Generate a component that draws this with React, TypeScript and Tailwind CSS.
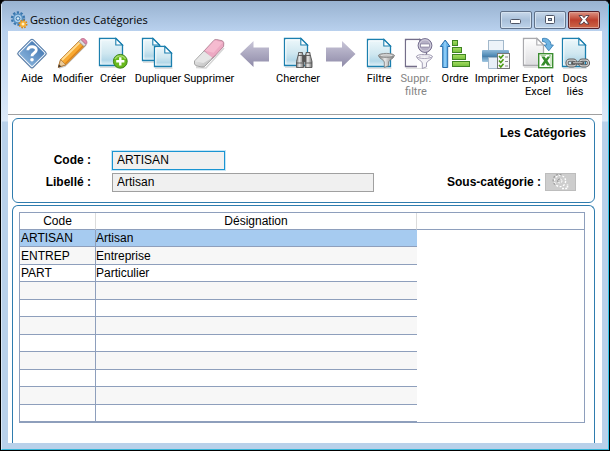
import { useState } from "react";
import type { ReactNode } from "react";

type Tool = {
    id: string;
    label: string;
    hint?: string;
    width: string;
    icon: ReactNode;
    disabled?: boolean;
};

const categories = [
    { code: "ARTISAN", name: "Artisan" },
    { code: "ENTREP", name: "Entreprise" },
    { code: "PART", name: "Particulier" },
];

const ROW_COUNT = 11;

// Gradients shared by the toolbar icons
function IconDefs() {
    return (
        <svg width="0" height="0" className="absolute" aria-hidden="true">
            <defs>
                <linearGradient id="page" x1="0" y1="0" x2="0" y2="1">
                    <stop offset="0" stopColor="#eef8fb" />
                    <stop offset="0.55" stopColor="#cfe7f0" />
                    <stop offset="0.8" stopColor="#b4d8e8" />
                    <stop offset="1" stopColor="#e6f3f9" />
                </linearGradient>
                <linearGradient id="greyPage" x1="0" y1="0" x2="0" y2="1">
                    <stop offset="0" stopColor="#ffffff" />
                    <stop offset="1" stopColor="#dcdcdf" />
                </linearGradient>
                <linearGradient id="arrow" x1="0" y1="0" x2="0" y2="1">
                    <stop offset="0" stopColor="#c9c6d8" />
                    <stop offset="1" stopColor="#8e8aa8" />
                </linearGradient>
                <linearGradient id="metal" x1="0" y1="0" x2="1" y2="0">
                    <stop offset="0" stopColor="#7d7d7d" />
                    <stop offset="0.4" stopColor="#e8e8e8" />
                    <stop offset="1" stopColor="#777777" />
                </linearGradient>
                <linearGradient id="blue" x1="0" y1="0" x2="0" y2="1">
                    <stop offset="0" stopColor="#4d80b8" />
                    <stop offset="1" stopColor="#7fabd6" />
                </linearGradient>
                <linearGradient id="green" x1="0" y1="0" x2="0" y2="1">
                    <stop offset="0" stopColor="#a6dd62" />
                    <stop offset="1" stopColor="#74bf3c" />
                </linearGradient>
                <linearGradient id="printer" x1="0" y1="0" x2="0" y2="1">
                    <stop offset="0" stopColor="#8fb9d8" />
                    <stop offset="0.5" stopColor="#4c87b3" />
                    <stop offset="1" stopColor="#a3c8e2" />
                </linearGradient>
                <linearGradient id="rubber" x1="0" y1="0" x2="1" y2="1">
                    <stop offset="0" stopColor="#f6f6f6" />
                    <stop offset="1" stopColor="#b4b4b4" />
                </linearGradient>
            </defs>
        </svg>
    );
}

function Icon({ children }: { children: ReactNode }) {
    return (
        <svg viewBox="0 0 34 34" className="h-[34px] w-[34px] shrink-0" fill="none" aria-hidden="true">
            {children}
        </svg>
    );
}

function Sheet({ x, y, w, h, stroke = "#1b7fae", fill = "url(#page)" }: { x: number; y: number; w: number; h: number; stroke?: string; fill?: string }) {
    return (
        <g transform={`translate(${x} ${y})`}>
            <path d={`M1 ${h + 1.2}H${w + 0.5}`} stroke="#bcbcbc" opacity="0.7" />
            <path d={`M0.5 0.5H${w - 7}L${w - 0.5} 7V${h - 0.5}H0.5Z`} fill={fill} stroke={stroke} strokeWidth="1.3" />
            <path d={`M1.8 ${h - 1.8}V1.8H${w - 8}`} stroke="#fff" />
            <path d={`M${w - 7.2} 0.5V7H${w - 0.5}Z`} fill="#fff" stroke={stroke} strokeWidth="1.1" />
        </g>
    );
}

function Funnel({ x, y, pale = false }: { x: number; y: number; pale?: boolean }) {
    const fill = pale ? "#f4f3f7" : "url(#metal)";
    const stroke = pale ? "#9993ad" : "#858585";
    return (
        <g transform={`translate(${x} ${y})`} stroke={stroke} strokeWidth="0.9">
            <path d="M0.5 2.5C1 6 6 6.5 6.3 9V14.5L10.5 12.8V9C11 6.5 16 6 16.3 2.5Z" fill={fill} />
            <ellipse cx="8.4" cy="2.4" rx="7.9" ry="2" fill={pale ? "#fff" : "#b9b9b9"} />
            <path d="M3 2.6C6 1.6 11 1.6 14 2.6" stroke={pale ? "#c9c5d6" : "#e4e4e4"} />
        </g>
    );
}

const HelpIcon = (
    <Icon>
        <path d="M17 2.2L32.6 17L17 32.8L1.4 17Z" fill="#999" opacity="0.35" />
        <rect x="6.4" y="5.9" width="21.2" height="21.2" rx="2" transform="rotate(45 17 16.5)" fill="#e9f0f8" stroke="#5079a8" />
        <rect x="8" y="7.5" width="18" height="18" rx="1" transform="rotate(45 17 16.5)" fill="url(#blue)" />
        <path d="M12.8 13.3C12.8 8.6 21.3 8.6 21.3 13C21.3 16.2 17 15.8 17 19.2" stroke="#fff" strokeWidth="2.8" />
        <circle cx="17" cy="22.8" r="1.8" fill="#fff" />
    </Icon>
);

const PencilIcon = (
    <Icon>
        <path d="M3 31L9 29L30 8" stroke="#999" strokeWidth="1.6" opacity="0.5" />
        <path d="M2.3 30.2L4.6 22.6L23.8 3.4L29 8.6L9.8 27.8Z" fill="#f8a932" stroke="#b77322" strokeWidth="0.9" />
        <path d="M6 23L24.6 4.6" stroke="#ffdc91" strokeWidth="2" />
        <path d="M9.3 26.6L28 8" stroke="#dc8218" strokeWidth="1.2" />
        <path d="M2.3 30.2L4.6 22.6L9.8 27.8Z" fill="#eccb98" stroke="#9f6a2c" strokeWidth="0.6" />
        <path d="M2 30.6L3 27.3L5.3 29.5Z" fill="#46392e" />
        <path d="M22.8 4.4L24.8 2.4L30 7.6L28 9.6Z" fill="#dcdcdc" stroke="#868686" strokeWidth="0.7" />
        <path d="M24.9 2.3C27.5 -0.5 33 4.5 30.1 7.4Z" fill="#e38bab" stroke="#b86586" strokeWidth="0.8" />
    </Icon>
);

const CreateIcon = (
    <Icon>
        <Sheet x={3} y={1} w={24} h={28} />
        <circle cx="24.3" cy="24.3" r="6.9" fill="#69b91c" stroke="#3f851b" />
        <path d="M19 22A6 6 0 0 1 29.5 22" stroke="#a4dc69" strokeWidth="1.3" />
        <path d="M24.3 20.2V28.4M20.2 24.3H28.4" stroke="#fff" strokeWidth="2.4" />
    </Icon>
);

const DuplicateIcon = (
    <Icon>
        <Sheet x={1} y={1} w={18} h={23} />
        <Sheet x={13} y={9} w={18} h={21} />
    </Icon>
);

const EraserIcon = (
    <Icon>
        <path d="M4 30.5L14 31L32 11" stroke="#999" opacity="0.4" strokeWidth="1.6" />
        <path d="M2.5 24L12.2 13.8L23.2 18.6L12.6 29.4Q11.6 30.2 10 30L4 28.8Q1.8 27.5 2.5 24Z" fill="url(#rubber)" stroke="#909090" strokeWidth="0.8" />
        <path d="M12.2 13.8L22 3.2Q23 2.2 24.6 2.5L30.4 3.8Q32.6 5 31.6 9.4L22.6 19.2L19.5 21.5Z" fill="#eda9c3" stroke="#a8798b" strokeWidth="0.8" />
        <path d="M13 13.8L22.6 3.6L30.8 5.4L21.6 15.8Z" fill="#f5bbd0" />
        <path d="M3 24.2L12.4 14.4L20.4 20.8L11.4 26Z" fill="#e6e6e6" />
    </Icon>
);

const PreviousIcon = (
    <Icon>
        <path d="M2 17L15.5 4V10.5H31V24.5H15.5V30Z" fill="url(#arrow)" />
    </Icon>
);

const NextIcon = (
    <Icon>
        <path d="M31.5 17L18 4V10.5H2V24.5H18V30Z" fill="url(#arrow)" />
    </Icon>
);

const SearchIcon = (
    <Icon>
        <Sheet x={3} y={1} w={24} h={28} />
        <g fill="url(#metal)" stroke="#555" strokeWidth="0.9">
            <path d="M17.5 17V15.5H21.5V17L22.5 18.5V30.5H15.5V24.5Z" />
            <path d="M29 17V15.5H25V17L24 18.5V30.5H31V24.5Z" />
            <rect x="21.7" y="18.5" width="3.1" height="6" fill="#555" />
            <path d="M15.5 26H22.5M24 26H31M17 18.5H22M24.5 18.5H29.5" />
        </g>
    </Icon>
);

const FilterIcon = (
    <Icon>
        <Sheet x={5} y={2} w={24} h={28} />
        <Funnel x={16} y={16} />
    </Icon>
);

const ClearFilterIcon = (
    <Icon>
        <Sheet x={6} y={2} w={22} h={28} stroke="#736d89" fill="#fbfbfd" />
        <path d="M18 20H29V31H18Z" fill="#fff" />
        <Funnel x={17} y={17} pale />
        <circle cx="26" cy="8.5" r="6.9" fill="#b5b0c6" stroke="#777090" />
        <circle cx="26" cy="8.5" r="5.6" stroke="#d2cfdd" />
        <rect x="21.5" y="7" width="9" height="3" fill="#fff" stroke="#716a8a" strokeWidth="0.6" />
    </Icon>
);

const SortIcon = (
    <Icon>
        <path d="M7.2 3L12 9.5H9.7V30.5H4.7V9.5H2.3Z" fill="#68b5ec" stroke="#286da8" />
        <path d="M7 5V30" stroke="#a3d8fa" strokeWidth="1.2" />
        <g fill="url(#green)" stroke="#3f8423">
            <rect x="14.5" y="3.5" width="5" height="5" />
            <rect x="14.5" y="10.5" width="9" height="5" />
            <rect x="14.5" y="17.5" width="13" height="5" />
            <rect x="14.5" y="24.5" width="17" height="5" />
        </g>
    </Icon>
);

const PrintIcon = (
    <Icon>
        <rect x="8.5" y="3.5" width="15" height="11" fill="#edf3f9" stroke="#a2b8cb" />
        <rect x="2" y="13" width="27" height="12" rx="1" fill="url(#printer)" />
        <path d="M3 19.5H28" stroke="#4c7fa8" />
        <path d="M8.5 20.5H20V31.5H8.5Z" fill="#e8eff7" stroke="#a2b8cb" />
        <rect x="17.5" y="16.5" width="12" height="15" fill="#f8f8f8" stroke="#777" />
        <path d="M19 19L20.8 21L23.5 17.8M19 23.5L20.8 25.5L23.5 22.3M19 28L20.8 30L23.5 26.8" stroke="#4b9a12" strokeWidth="1.6" />
        <path d="M25 20H28M25 24.5H28M25 29H28" stroke="#888" />
    </Icon>
);

const ExcelIcon = (
    <Icon>
        <Sheet x={2} y={1} w={21} h={28} stroke="#a9a9ad" fill="url(#greyPage)" />
        <path d="M21.5 4.5V1.5C26 0.5 30 3.5 30 8H32.4L27.8 13.8L23.2 8H25.5C25.5 6 24 4.5 21.5 4.5Z" fill="#6fb4e2" stroke="#3a7fb4" strokeWidth="0.9" />
        <rect x="17.7" y="16.7" width="14" height="14" fill="#fff" stroke="#3c8e31" strokeWidth="1.4" />
        <path d="M19.5 18.5H25M28 18.5H30V29H28" stroke="#a9d49c" />
        <path d="M20.3 19.5H23.6L25 21.7L26.6 19.5H29.4L26.4 23.8L29.6 28.5H26.2L24.7 26.1L23 28.5H19.8L23.1 23.8Z" fill="#358c2b" />
    </Icon>
);

const LinkedDocsIcon = (
    <Icon>
        <Sheet x={4} y={1} w={24} h={29} />
        <g stroke="#606060" strokeWidth="3.2">
            <rect x="9" y="23.2" width="9" height="5.6" rx="2.8" />
            <rect x="21.5" y="23.2" width="9" height="5.6" rx="2.8" />
        </g>
        <g stroke="#d0d0d0" strokeWidth="1.2">
            <rect x="9" y="23.2" width="9" height="5.6" rx="2.8" />
            <rect x="21.5" y="23.2" width="9" height="5.6" rx="2.8" />
        </g>
        <path d="M14.5 26H25" stroke="#555" strokeWidth="3" strokeLinecap="round" />
        <path d="M15 25.7H24.5" stroke="#ccc" strokeWidth="1.1" />
    </Icon>
);

const tools: Tool[] = [
    { id: "help", label: "Aide", width: "w-10", icon: HelpIcon },
    { id: "edit", label: "Modifier", width: "w-[42px]", icon: PencilIcon },
    { id: "create", label: "Créer", width: "w-[38px]", icon: CreateIcon },
    { id: "duplicate", label: "Dupliquer", width: "w-[52px]", icon: DuplicateIcon },
    { id: "delete", label: "Supprimer", width: "w-[50px]", icon: EraserIcon },
    { id: "previous", label: "", hint: "Précédent", width: "w-[42px]", icon: PreviousIcon },
    { id: "search", label: "Chercher", width: "w-11", icon: SearchIcon },
    { id: "next", label: "", hint: "Suivant", width: "w-[42px]", icon: NextIcon },
    { id: "filter", label: "Filtre", width: "w-[34px]", icon: FilterIcon },
    { id: "clear-filter", label: "Suppr.\nfiltre", width: "w-10", icon: ClearFilterIcon, disabled: true },
    { id: "sort", label: "Ordre", width: "w-[38px]", icon: SortIcon },
    { id: "print", label: "Imprimer", width: "w-[46px]", icon: PrintIcon },
    { id: "excel", label: "Export\nExcel", width: "w-9", icon: ExcelIcon },
    { id: "docs", label: "Docs\nliés", width: "w-[38px]", icon: LinkedDocsIcon },
];

function TitleBar() {
    return (
        <header className="flex h-[30px] items-center bg-linear-to-b from-[#98b2d0] to-[#b9d1ee] pt-2 pr-2 pl-2">
            <svg viewBox="0 0 18 18" className="h-[18px] w-[18px]" fill="none" aria-hidden="true">
                <circle cx="8" cy="7.5" r="5.9" stroke="#3976ad" strokeWidth="2.6" strokeDasharray="2.2 1.5" />
                <circle cx="8" cy="7.5" r="4.5" fill="#a9cdea" stroke="#568fc1" strokeWidth="1.6" />
                <circle cx="8" cy="7.5" r="1.8" fill="#dcecf8" stroke="#3976ad" />
                <circle cx="13" cy="13" r="3.5" stroke="#d88718" strokeWidth="2" strokeDasharray="1.6 1.1" />
                <circle cx="13" cy="13" r="2.3" fill="#fff0c8" stroke="#f3ad34" strokeWidth="1.6" />
            </svg>
            <h1 className="ml-[2px] flex-1 font-['Open_Sans','Noto_Sans',sans-serif] text-[11px] leading-4 whitespace-nowrap">Gestion des Catégories</h1>
            <div className="flex gap-[2px]">
                <button type="button" aria-label="Réduire" className="flex h-[18px] w-8 items-center justify-center rounded-xs border border-[#61728a] bg-linear-to-b from-[#c8d8ea] via-[#a9c0da] to-[#bdd3ea] shadow-[inset_0_0_0_1px_#d5e2f0]">
                    <svg viewBox="0 0 12 6" className="mt-1 h-[6px] w-3" aria-hidden="true">
                        <rect x="0.5" y="0.5" width="10" height="4" rx="1" fill="#fff" stroke="#4e5566" />
                    </svg>
                </button>
                <button type="button" aria-label="Agrandir" className="flex h-[18px] w-8 items-center justify-center rounded-xs border border-[#61728a] bg-linear-to-b from-[#c8d8ea] via-[#a9c0da] to-[#bdd3ea] shadow-[inset_0_0_0_1px_#d5e2f0]">
                    <svg viewBox="0 0 12 10" className="h-[10px] w-3" aria-hidden="true">
                        <rect x="1.5" y="0.5" width="9" height="8" rx="1" fill="#fff" stroke="#4e5566" />
                        <rect x="4.5" y="3.5" width="3" height="2" fill="#a9c0da" stroke="#4e5566" />
                    </svg>
                </button>
                <button type="button" aria-label="Fermer" className="flex h-[18px] w-8 items-center justify-center rounded-xs border border-[#56202a] bg-linear-to-b from-[#dc9183] via-[#bd3f2d] to-[#cc6648] shadow-[inset_0_0_0_1px_#dfa294]">
                    <svg viewBox="0 0 12 10" className="h-[10px] w-3" aria-hidden="true">
                        <path d="M1 0.5H4.2L6 2.7L7.8 0.5H11L7.8 4.7L11 9H7.8L6 6.8L4.2 9H1L4.2 4.7Z" fill="#fff" stroke="#4e3a45" strokeWidth="0.9" />
                    </svg>
                </button>
            </div>
        </header>
    );
}

export default function App() {
    const [selected, setSelected] = useState(0);
    const current = categories[selected];
    const rows = Array.from({ length: ROW_COUNT }, (_, i) => categories[i]);

    return (
        <div className="flex min-h-screen bg-black font-['Liberation_Sans',Arial,sans-serif] text-[12px] text-black">
            <IconDefs />
            <div className="flex flex-1 flex-col overflow-hidden rounded-t-md border border-black border-t-[#2b2b33] bg-[#b9d1ea]">
                <div className="flex flex-1 flex-col border-r border-b border-l border-r-[#35c5e8] border-b-[#35b5d8] border-l-[#dbe8f5]">
                    <TitleBar />

                    <div className="flex flex-1 flex-col bg-[linear-gradient(to_bottom,#b9d1ee_0,#dce9f8_90px,#b9d1ea_91px)] px-[6px] pb-[6px]">
                        <main className="flex flex-1 flex-col bg-white">
                            <nav className="flex h-[84px] border-b border-[#a0a0a0] pt-[6px] pl-1">
                                {tools.map((tool) => (
                                    <button
                                        key={tool.id}
                                        type="button"
                                        disabled={tool.disabled}
                                        aria-label={tool.hint}
                                        className={`flex shrink-0 flex-col items-center ${tool.width}`}
                                    >
                                        {tool.icon}
                                        <span className={`mt-px text-center font-[Roboto,'Liberation_Sans',sans-serif] text-[11px] leading-[13px] whitespace-pre ${tool.disabled ? "text-[#848484]" : ""}`}>
                                            {tool.label}
                                        </span>
                                    </button>
                                ))}
                            </nav>

                            <section className="mt-[3px] mr-[7px] ml-1 rounded-md border border-[#2f7cae] pt-1 pb-[10px]">
                                <h2 className="pr-2 text-right leading-5 font-bold">Les Catégories</h2>
                                <div className="mt-[7px] flex items-center">
                                    <label htmlFor="code" className="w-[78px] text-right leading-5 font-bold">Code :</label>
                                    <input
                                        id="code"
                                        readOnly
                                        value={current.code}
                                        className="ml-[21px] h-[19px] w-[113px] border border-[#1a94d2] bg-[#f0f0f0] px-1 shadow-[0_0_0_1px_#c5e6f6] outline-none"
                                    />
                                </div>
                                <div className="mt-[2px] flex items-center">
                                    <label htmlFor="name" className="w-[78px] text-right leading-5 font-bold">Libellé :</label>
                                    <input
                                        id="name"
                                        readOnly
                                        value={current.name}
                                        className="ml-[21px] h-[19px] w-[262px] border border-[#a0a0a0] bg-[#f0f0f0] px-1 outline-none"
                                    />
                                    <label htmlFor="sub" className="ml-auto leading-5 font-bold">Sous-catégorie :</label>
                                    <button id="sub" type="button" disabled className="mr-[18px] ml-1 flex h-[18px] w-[31px] items-center justify-center border border-[#bdbdbd] bg-[#cdcdcd]">
                                        <svg viewBox="0 0 18 16" className="h-4 w-[18px]" fill="none" aria-hidden="true">
                                            <circle cx="8" cy="7" r="5.6" stroke="#fff" strokeWidth="1.4" strokeDasharray="2 1.5" />
                                            <path d="M3 10.5A5.5 5.5 0 0 1 11 2" stroke="#999" strokeWidth="1.2" strokeDasharray="2 1.5" />
                                            <circle cx="8" cy="7" r="2" stroke="#fff" strokeDasharray="2 1" />
                                            <path d="M6 8A2 2 0 0 1 8 5" stroke="#8c8c8c" />
                                            <path d="M10 14.5H15.5V10" stroke="#fff" strokeWidth="1.6" strokeDasharray="2 1.2" />
                                        </svg>
                                    </button>
                                </div>
                            </section>

                            <section className="mt-[2px] mr-[7px] ml-1 flex-1 rounded-t-md border border-b-0 border-[#2f7cae] pt-[6px] pr-[9px] pb-4 pl-[6px]">
                                <div className="border border-[#8e9fbc]">
                                    <table className="w-full table-fixed border-separate border-spacing-0 leading-4">
                                        <colgroup>
                                            <col className="w-[76px]" />
                                            <col className="w-[321px]" />
                                            <col />
                                        </colgroup>
                                        <thead>
                                            <tr className="h-[17px]">
                                                <th className="border-r border-b border-r-[#dcdcdc] border-b-[#8e9fbc] p-0 font-normal">Code</th>
                                                <th className="border-r border-b border-r-[#dcdcdc] border-b-[#8e9fbc] p-0 font-normal">Désignation</th>
                                                <th className="border-b border-[#8e9fbc] p-0" />
                                            </tr>
                                        </thead>
                                        <tbody>
                                            {rows.map((row, i) => (
                                                <tr
                                                    key={i}
                                                    onClick={() => row && setSelected(i)}
                                                    className={`odd:h-[17px] even:h-[18px] ${i === selected ? "bg-[#a6cbf0]" : "even:bg-[#f7f7f7]"}`}
                                                >
                                                    <td className="border-r border-b border-[#8e9fbc] p-0 pl-px">{row?.code}</td>
                                                    <td className="border-b border-[#8e9fbc] p-0">{row?.name}</td>
                                                    <td className="bg-white p-0" />
                                                </tr>
                                            ))}
                                        </tbody>
                                    </table>
                                </div>
                            </section>
                        </main>
                    </div>
                </div>
            </div>
        </div>
    );
}
